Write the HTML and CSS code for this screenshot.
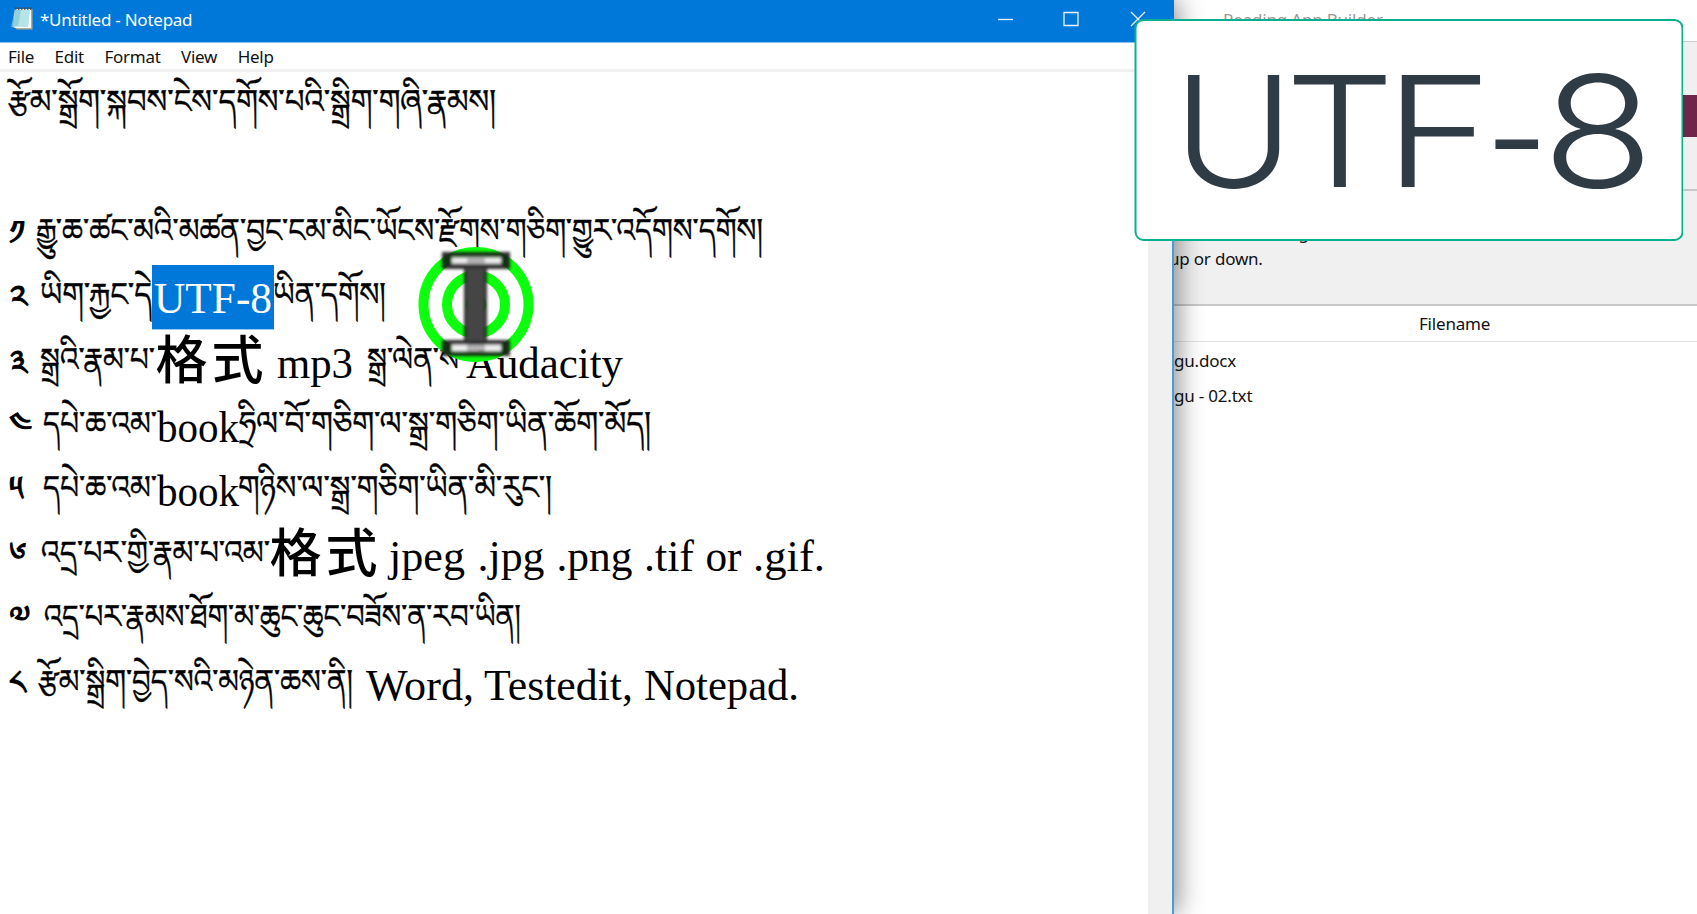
FILE: index.html
```html
<!DOCTYPE html>
<html lang="bo">
<head>
<meta charset="utf-8">
<title>*Untitled - Notepad</title>
<link rel="stylesheet" href="styles.css">
</head>
<body>
<div class="desktop">
  <main class="notepad">
    <header class="titlebar">
      <svg class="app-icon" width="24" height="26" viewBox="0 0 24 26">
        <path d="M5 3 L1 21 L9 23 Z" fill="#5fb6dc"/>
        <path d="M5 3 H22.500 V23.500 H7 L4 21 Z" fill="#b8aa8c"/>
        <path d="M5 3 H21 V22 H5 L3.500 20 Z" fill="#f6fbf8"/>
        <path d="M5 4 H19.500 L18 20.500 H3.500 Z" fill="#8fd0dc"/>
        <path d="M11 4 H19.500 L18 20.500 H8 Z" fill="#b5e4e6"/>
        <path d="M5 2.500 H22" stroke="#454545" stroke-width="2.400" stroke-dasharray="1.500 1.500"/>
      </svg>
      <span class="title">*Untitled - Notepad</span>
      <svg class="controls" width="170" height="42" viewBox="0 0 170 42" fill="none" stroke="#e8f4ff" stroke-width="1.300">
        <path d="M0 19.500 H15"/>
        <path d="M66 12.500 H80 V25.500 H66 Z"/>
        <path d="M133 12 L147 26 M147 12 L133 26"/>
      </svg>
    </header>
    <nav class="menu"><span>File</span><span>Edit</span><span>Format</span><span>View</span><span>Help</span></nav>
    <div class="editor">
      <div class="page">
        <svg class="line"><text class="bo" x="8" y="41" textLength="488" lengthAdjust="spacingAndGlyphs">རྩོམ་སྒྲོག་སྐབས་ངེས་དགོས་པའི་སྒྲིག་གཞི་རྣམས།</text></svg>
        <svg class="line"></svg>
        <svg class="line">
          <text class="bo digit" x="9" y="43">༡</text>
          <text class="bo" x="36" y="41" textLength="727" lengthAdjust="spacingAndGlyphs">རྒྱུ་ཆ་ཚང་མའི་མཚན་བྱང་ངམ་མིང་ཡོངས་རྫོགས་གཅིག་གྱུར་འདོགས་དགོས།</text>
        </svg>
        <svg class="line">
          <text class="bo digit" x="10" y="44">༢</text>
          <text class="bo" x="40" y="41" textLength="112" lengthAdjust="spacingAndGlyphs">ཡིག་རྐྱང་དེ</text>
          <rect x="152" width="122" height="64.400" fill="#0078d9"/>
          <text class="en selected" x="154" y="48" textLength="118" lengthAdjust="spacingAndGlyphs">UTF-8</text>
          <text class="bo" x="273" y="41" textLength="113" lengthAdjust="spacingAndGlyphs">ཡིན་དགོས།</text>
        </svg>
        <svg class="line">
          <text class="bo digit" x="10" y="44">༣</text>
          <text class="bo" x="40" y="41" textLength="115" lengthAdjust="spacingAndGlyphs">སྒྲའི་རྣམ་པ་</text>
          <text class="zh" x="155.500 211.500" y="48.500">格式</text>
          <text class="en" x="277" y="48" textLength="76" lengthAdjust="spacingAndGlyphs">mp3</text>
          <text class="bo" x="367" y="41" textLength="92" lengthAdjust="spacingAndGlyphs">སྒྲ་ལེན་ས</text>
          <text class="en" x="466" y="48" textLength="157" lengthAdjust="spacingAndGlyphs">Audacity</text>
        </svg>
        <svg class="line">
          <text class="bo digit" x="9" y="42">༤</text>
          <text class="bo" x="43" y="41" textLength="114" lengthAdjust="spacingAndGlyphs">དཔེ་ཆ་འམ་</text>
          <text class="en" x="157" y="48" textLength="82" lengthAdjust="spacingAndGlyphs">book</text>
          <text class="bo" x="239" y="41" textLength="412" lengthAdjust="spacingAndGlyphs">ཧྲིལ་བོ་གཅིག་ལ་སྒྲ་གཅིག་ཡིན་ཆོག་མོད།</text>
        </svg>
        <svg class="line">
          <text class="bo digit" x="9" y="42">༥</text>
          <text class="bo" x="43" y="41" textLength="114" lengthAdjust="spacingAndGlyphs">དཔེ་ཆ་འམ་</text>
          <text class="en" x="157" y="48" textLength="82" lengthAdjust="spacingAndGlyphs">book</text>
          <text class="bo" x="238" y="41" textLength="314" lengthAdjust="spacingAndGlyphs">གཉིས་ལ་སྒྲ་གཅིག་ཡིན་མི་རུང་།</text>
        </svg>
        <svg class="line">
          <text class="bo digit" x="9" y="43">༦</text>
          <text class="bo" x="41" y="41" textLength="229" lengthAdjust="spacingAndGlyphs">འདྲ་པར་གྱི་རྣམ་པ་འམ་</text>
          <text class="zh" x="269.500 325.500" y="48.500">格式</text>
          <text class="en" x="389" y="48" textLength="76" lengthAdjust="spacingAndGlyphs">jpeg</text>
          <text class="en" x="477.500" y="48" textLength="67" lengthAdjust="spacingAndGlyphs">.jpg</text>
          <text class="en" x="556.500" y="48" textLength="76" lengthAdjust="spacingAndGlyphs">.png</text>
          <text class="en" x="644" y="48" textLength="50" lengthAdjust="spacingAndGlyphs">.tif</text>
          <text class="en" x="705.500" y="48" textLength="36" lengthAdjust="spacingAndGlyphs">or</text>
          <text class="en" x="753" y="48" textLength="72" lengthAdjust="spacingAndGlyphs">.gif.</text>
        </svg>
        <svg class="line">
          <text class="bo digit" x="9" y="42">༧</text>
          <text class="bo" x="44" y="41" textLength="477" lengthAdjust="spacingAndGlyphs">འདྲ་པར་རྣམས་ཐོག་མ་ཆུང་ཆུང་བཟོས་ན་རབ་ཡིན།</text>
        </svg>
        <svg class="line">
          <text class="bo digit" x="9" y="42">༨</text>
          <text class="bo" x="38" y="41" textLength="315" lengthAdjust="spacingAndGlyphs">རྩོམ་སྒྲིག་བྱེད་སའི་མཉེན་ཆས་ནི།</text>
          <text class="en" x="366" y="48" textLength="108" lengthAdjust="spacingAndGlyphs">Word,</text>
          <text class="en" x="484" y="48" textLength="149" lengthAdjust="spacingAndGlyphs">Testedit,</text>
          <text class="en" x="644" y="48" textLength="155" lengthAdjust="spacingAndGlyphs">Notepad.</text>
        </svg>
      </div>
      <div class="scrollbar"></div>
    </div>
  </main>
  <aside class="builder">
    <div class="builder-title">Reading App Builder</div>
    <div class="toolbar"><div class="accent"></div></div>
    <div class="hint"><span>the rows to change</span><span>up or down.</span></div>
    <div class="table-head">Filename</div>
    <div class="file">gu.docx</div>
    <div class="file">gu - 02.txt</div>
  </aside>
  <svg class="pointer" width="120" height="120" viewBox="0 0 120 120">
    <defs><filter id="soft" x="-20%" y="-20%" width="140%" height="140%"><feGaussianBlur stdDeviation="1.600"/></filter></defs>
    <g fill="none" stroke="#0cff0c" stroke-width="10"><circle cx="60" cy="60.500" r="52.500"/><circle cx="60" cy="60.500" r="29"/></g>
    <circle cx="60" cy="60.500" r="10.500" fill="#0cff0c"/>
    <g filter="url(#soft)">
      <path d="M26 8 H94 V25 H71 V96 H94 V112 H26 V96 H48 V25 H26 Z" fill="#161616" fill-opacity=".9"/>
      <path d="M51 25 H68 V96 H51 Z" fill="#444"/>
      <path d="M36 16.500 H85 M36 104 H85" stroke="#eee" stroke-width="6"/>
      <path d="M51 16.500 H69 M51 104 H69" stroke="#b4b4b4" stroke-width="6"/>
    </g>
  </svg>
  <svg class="callout" width="549" height="222" viewBox="0 0 549 222">
    <rect x="1.500" y="1" width="547" height="220" rx="8" fill="#fff" stroke="#08b08f" stroke-width="2"/>
    <g class="callout-text">
      <text transform="translate(39 168) scale(1.070 1)">U</text>
      <text transform="translate(151 168) scale(1.120 1)">T</text>
      <text transform="translate(250 168) scale(1.200 1)">F</text>
      <text transform="translate(351 173) scale(.910 1)">-</text>
      <text transform="translate(408 168) scale(1.190 1)">8</text>
    </g>
  </svg>
</div>
</body>
</html>
```
FILE: styles.css
```css
* { box-sizing: border-box; }
body { margin: 0; background: #fff; font-family: "Noto Sans", "Open Sans", sans-serif; }
.desktop { position: relative; display: flex; width: 1697px; height: 914px; overflow: hidden; }
.notepad { position: relative; z-index: 1; display: flex; flex-direction: column; width: 1174px; border-right: 2px solid #4a9ade; background: #fff; box-shadow: 4px 0 24px rgba(0, 0, 0, .45); }
.titlebar { display: flex; align-items: center; width: 1174px; height: 43px; padding-left: 10px; border-bottom: 1px solid #8abfee; background: #0078d9; color: #fff; }
.app-icon { margin-top: -4px; }
.title { margin: -3px auto 0 6px; font-size: 17px; letter-spacing: -.25px; }
.controls { margin-right: 6px; }
.menu { display: flex; gap: 20.5px; align-items: center; height: 29px; padding: 2px 0 0 8px; border-bottom: 3px solid #f0f0f0; font-size: 17px; letter-spacing: -.27px; line-height: 20px; color: #111; }
.editor { display: flex; flex: 1; }
.page { display: flex; flex-direction: column; flex: 1; }
.scrollbar { width: 24px; background: #f0f0f0; }
.line { display: block; width: 1140px; height: 64.4px; overflow: visible; }
.bo { font-family: "Noto Serif Tibetan", "Noto Sans Tibetan", "Jomolhari", serif; font-size: 33.5px; stroke: #000; stroke-width: .4px; }
.digit { stroke-width: 1px; }
.en { font-family: "Liberation Serif", serif; font-size: 44px; }
.selected { fill: #fff; }
.zh { font-family: "Noto Sans CJK SC", sans-serif; font-size: 52px; font-weight: 500; }
.builder { flex: 1; background: #fff; font-size: 17px; letter-spacing: -.2px; color: #111; }
.builder-title { height: 42px; padding: 8px 0 0 49px; color: #999; border-bottom: 1px solid #ccc; }
.toolbar { display: flex; justify-content: flex-end; height: 149px; padding-top: 53px; border-bottom: 2px solid #c8c8c8; background: #f0f0f0; }
.accent { width: 16px; height: 42px; background: #70264b; }
.hint { display: flex; flex-direction: column; gap: 3px; height: 115px; padding-top: 30px; margin-left: -5px; border-bottom: 2px solid #c8c8c8; background: #f0f0f0; }
.table-head { height: 36px; padding-left: 245px; line-height: 36px; border-bottom: 1px solid #e2e2e2; }
.file { height: 35px; line-height: 38px; }
.pointer { position: absolute; z-index: 2; left: 416px; top: 244px; }
.callout { position: absolute; z-index: 3; left: 1134px; top: 19px; }
.callout-text { font-family: Inter, sans-serif; font-size: 154px; font-weight: 300; fill: #2f3b45; }
```
